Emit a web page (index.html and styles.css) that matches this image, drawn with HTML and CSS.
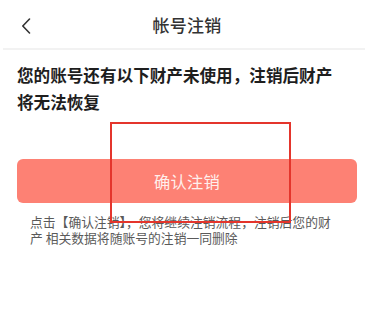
FILE: index.html
```html
<!DOCTYPE html>
<html lang="zh-CN">
<head>
<meta charset="utf-8">
<title>帐号注销</title>
<link rel="stylesheet" href="styles.css">
</head>
<body>
<div class="page">
  <header class="topbar">
    <span class="back">
      <svg width="10" height="16" viewBox="0 0 10 16"><path d="M8.5 1 L1.8 8 L8.5 15" fill="none" stroke="#333" stroke-width="1.6" stroke-linecap="round" stroke-linejoin="round"/></svg>
    </span>
    <h1 class="title">帐号注销</h1>
  </header>
  <main class="content">
    <p class="warning">您的账号还有以下财产未使用，注销后财产将无法恢复</p>
    <button class="confirm">确认注销</button>
    <p class="note">点击【确认注销】，您将继续注销流程，注销后您的财产 相关数据将随账号的注销一同删除</p>
  </main>
  <div class="highlight"></div>
</div>
</body>
</html>
```
FILE: styles.css
```css
html, body {
  margin: 0;
  padding: 0;
  background: #fff;
}
body {
  font-family: "Noto Sans CJK SC", "Noto Sans", sans-serif;
  color: #222;
}
.page {
  position: relative;
  width: 365px;
  height: 325px;
  overflow: hidden;
}
.topbar {
  height: 48px;
  display: flex;
  align-items: center;
  justify-content: center;
  position: relative;
  margin-left: 3px;
  border-bottom: 2px solid #f2f2f2;
}
.back {
  position: absolute;
  left: 18px;
  top: 18px;
  width: 10px;
  height: 16px;
  display: flex;
}
.title {
  margin: 0 0 0 6px;
  font-size: 17px;
  font-weight: 500;
  color: #333;
  letter-spacing: 0.2px;
}
.content {
  padding: 0 20px 0 17px;
}
.warning {
  margin: 12px 0 0;
  font-size: 16.6px;
  line-height: 27px;
  font-weight: 700;
  color: #1e1e1e;
}
.confirm {
  display: block;
  width: 340px;
  height: 44px;
  margin: 43px 0 0;
  border: 0;
  border-radius: 6px;
  background: #fd8174;
  color: #ffefec;
  font-family: inherit;
  font-size: 16.3px;
  letter-spacing: 0.2px;
  padding: 0;
}
.note {
  width: 306px;
  margin: 11px 0 0 13px;
  font-size: 12.8px;
  line-height: 16px;
  color: #5a5a5a;
}
.highlight {
  position: absolute;
  left: 110px;
  top: 122px;
  width: 177px;
  height: 97px;
  border: 2px solid #e4352c;
}
```
